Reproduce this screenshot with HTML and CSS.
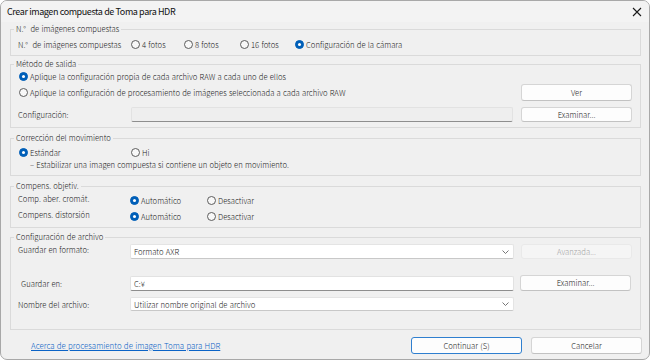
FILE: index.html
```html
<!DOCTYPE html>
<html lang="es">
<head>
<meta charset="utf-8">
<title>Crear imagen compuesta de Toma para HDR</title>
<link rel="stylesheet" href="styles.css">
</head>
<body>
<div class="window">
  <div class="titlebar">
    <span class="title">Crear imagen compuesta de Toma para HDR</span>
    <svg class="close" width="10" height="10" viewBox="0 0 10 10"><path d="M1 1L9 9M9 1L1 9" stroke="#1a1a1a" stroke-width="1.1" fill="none"/></svg>
  </div>
  <div class="content">
    <fieldset class="group g1">
      <legend>N.°&nbsp; de imágenes compuestas</legend>
      <div class="row r-g1">
        <span class="lbl col1">N.°&nbsp; de imágenes compuestas</span>
        <label class="radio w53"><span class="dot"></span>4 fotos</label>
        <label class="radio w56"><span class="dot"></span>8 fotos</label>
        <label class="radio w55"><span class="dot"></span>16 fotos</label>
        <label class="radio"><span class="dot on"></span>Configuración de la cámara</label>
      </div>
    </fieldset>

    <fieldset class="group g2">
      <legend>Método de salida</legend>
      <div class="row r-m1">
        <label class="radio ind1"><span class="dot on"></span>Aplique la configuración propia de cada archivo RAW a cada uno de ellos</label>
      </div>
      <div class="row r-m2">
        <label class="radio ind1 grow"><span class="dot"></span>Aplique la configuración de procesamiento de imágenes seleccionada a cada archivo RAW</label>
        <button class="btn side">Ver</button>
      </div>
      <div class="row r-m3">
        <span class="lbl col1">Configuración:</span>
        <span class="field grey grow"></span>
        <button class="btn side short">Examinar...</button>
      </div>
    </fieldset>

    <fieldset class="group g3">
      <legend>Corrección del movimiento</legend>
      <div class="row r-c1">
        <label class="radio ind1 w112"><span class="dot on"></span>Estándar</label>
        <label class="radio"><span class="dot"></span>Hi</label>
      </div>
      <div class="row r-c2">
        <span class="note">– Estabilizar una imagen compuesta si contiene un objeto en movimiento.</span>
      </div>
    </fieldset>

    <fieldset class="group g4">
      <legend>Compens. objetiv.</legend>
      <div class="row r-o1">
        <span class="lbl col1b up">Comp. aber. cromát.</span>
        <label class="radio w77"><span class="dot on"></span>Automático</label>
        <label class="radio"><span class="dot"></span>Desactivar</label>
      </div>
      <div class="row r-o2">
        <span class="lbl col1b up">Compens. distorsión</span>
        <label class="radio w77"><span class="dot on"></span>Automático</label>
        <label class="radio"><span class="dot"></span>Desactivar</label>
      </div>
    </fieldset>

    <fieldset class="group g5">
      <legend>Configuración de archivo</legend>
      <div class="row r-f1">
        <span class="lbl col1b top">Guardar en formato:</span>
        <span class="select grow">Formato AXR<svg class="chev" width="7" height="4" viewBox="0 0 7 4"><path d="M0.5 0.5L3.5 3.5L6.5 0.5" stroke="#666" stroke-width="0.9" fill="none"/></svg></span>
        <button class="btn side dis">Avanzada...</button>
      </div>
      <div class="row r-f2">
        <span class="lbl col1b ind3">Guardar en:</span>
        <span class="field white grow">C:¥</span>
        <button class="btn side2">Examinar...</button>
      </div>
      <div class="row r-f3">
        <span class="lbl col1b">Nombre del archivo:</span>
        <span class="select grow">Utilizar nombre original de archivo<svg class="chev" width="7" height="4" viewBox="0 0 7 4"><path d="M0.5 0.5L3.5 3.5L6.5 0.5" stroke="#666" stroke-width="0.9" fill="none"/></svg></span>
        <span class="spacer"></span>
      </div>
    </fieldset>
  </div>
  <div class="footer">
    <a class="link" href="#">Acerca de procesamiento de imagen Toma para HDR</a>
    <span class="grow"></span>
    <button class="btn fbtn default">Continuar (S)</button>
    <button class="btn fbtn">Cancelar</button>
  </div>
</div>
</body>
</html>
```

FILE: styles.css
```css
* { box-sizing: border-box; }
html, body { margin: 0; padding: 0; background: #ffffff; }
body {
  font-family: "Noto Sans CJK JP", "Noto Sans", sans-serif;
  font-size: 7.7px;
  font-weight: 300;
  word-spacing: 0.5px;
  color: #1c1c1c;
}
.window {
  width: 650px;
  height: 360px;
  border: 1px solid #a8a8a8;
  border-radius: 7px;
  background: #f0f0f0;
  display: flex;
  flex-direction: column;
  overflow: hidden;
}
.titlebar {
  height: 21px;
  flex: none;
  display: flex;
  align-items: center;
  justify-content: space-between;
  padding: 0 7px 0 6px;
  background: #f3f3f3;
}
.title {
  font-family: "Noto Sans CJK JP", "Noto Sans", sans-serif;
  font-size: 9px;
  font-weight: 400;
  word-spacing: 0;
  letter-spacing: -0.4px;
  color: #111;
}
.close { display: block; }
.content {
  padding: 2px 8px 0 9px;
  display: flex;
  flex-direction: column;
}
.group {
  margin: 0;
  padding: 0 8px 0 7px;
  border: 1px solid #dadada;
  min-inline-size: 0;
}
.group legend {
  padding: 0 2px;
  margin-left: -4px;
  font-size: 7.7px;
  line-height: 10px;
  height: 10px;
  color: #1c1c1c;
}
.row { display: flex; align-items: center; }
.grow { flex: 1 1 auto; min-width: 0; }
.lbl { white-space: nowrap; }
.col1 { width: 113px; flex: none; }
.col1b { width: 112px; flex: none; }
.ind1 { margin-left: 1px; }
.ind3 { padding-left: 3px; }
.w53 { width: 53px; flex: none; }
.w56 { width: 56px; flex: none; }
.w55 { width: 55px; flex: none; }
.w77 { width: 77px; flex: none; }
.w112 { width: 112px; flex: none; }
.up { position: relative; top: -2px; }
.top { align-self: flex-start; }

.radio {
  display: flex;
  align-items: center;
  white-space: nowrap;
}
.dot {
  width: 9px;
  height: 9px;
  border-radius: 50%;
  border: 1px solid #5c5c5c;
  background: #f8f8f8;
  margin-right: 2px;
  flex: none;
  position: relative;
}
.dot.on {
  border-color: #005fb8;
  background: #005fb8;
}
.dot.on::after {
  content: "";
  position: absolute;
  left: 2px; top: 2px;
  width: 3px; height: 3px;
  border-radius: 50%;
  background: #ffffff;
}

.g1 { padding-top: 3px; padding-bottom: 4px; }
.r-g1 { height: 14px; }
.g2 { margin-top: 3px; padding-bottom: 5px; }
.r-m1 { height: 15px; }
.r-m2 { height: 17px; }
.r-m3 { margin-top: 5px; height: 16px; }
.g3 { margin-top: 5px; padding-top: 2px; padding-bottom: 5px; }
.r-c1 { height: 14px; }
.r-c2 { height: 11px; padding-left: 12px; }
.g4 { margin-top: 5px; padding-top: 1px; padding-bottom: 3px; }
.r-o1 { height: 16px; }
.r-o2 { height: 16px; }
.g5 { margin-top: 4px; padding-top: 2px; padding-bottom: 18px; }
.r-f1 { height: 15px; align-items: flex-start; }
.r-f1 .select { height: 15px; }
.r-f1 .lbl { line-height: 12px; }
.r-f2 { margin-top: 16px; height: 16px; }
.r-f3 { margin-top: 6px; height: 14px; }

.field {
  height: 15px;
  display: flex;
  align-items: center;
  padding-left: 3px;
  border: 1px solid #e2e2e2;
  border-bottom: 1px solid #8e8e8e;
  border-radius: 2px;
}
.field.grey { background: #eeeeee; margin-right: 8px; }
.field.white { background: #ffffff; margin-right: 6px; }
.select {
  height: 14px;
  display: flex;
  align-items: center;
  padding-left: 3px;
  padding-right: 4px;
  background: #ffffff;
  border: 1px solid #e4e4e4;
  border-bottom-color: #c8c8c8;
  border-radius: 2px;
  margin-right: 7px;
}
.chev { margin-left: auto; display: block; }
.spacer { width: 111px; flex: none; }

.btn {
  font-family: "Noto Sans CJK JP", "Noto Sans", sans-serif;
  font-size: 7.7px;
  font-weight: 300;
  word-spacing: 0.5px;
  color: #1c1c1c;
  background: #fdfdfd;
  border: 1px solid #d5d5d5;
  border-bottom-color: #c2c2c2;
  border-radius: 3px;
  padding: 0;
  height: 17px;
  line-height: 15px;
}
.side { width: 111px; flex: none; }
.side.short { height: 15px; line-height: 13px; margin-top: 1px; }
.side2 { width: 111px; flex: none; height: 16px; line-height: 14px; margin-right: 1px; }
.dis { color: #a3a3a3; background: #f5f5f5; border-color: #e9e9e9; height: 15px; line-height: 13px; }

.note { white-space: nowrap; }

.footer {
  display: flex;
  align-items: center;
  margin-top: 7px;
  height: 17px;
  padding: 0 7px 0 30px;
}
.link {
  color: #0b63c6;
  text-decoration: underline;
  font-size: 7.9px;
  white-space: nowrap;
}
.fbtn { width: 111px; flex: none; margin-left: 9px; height: 17px; }
.fbtn.default { border-color: #2f7fcf; }
```
